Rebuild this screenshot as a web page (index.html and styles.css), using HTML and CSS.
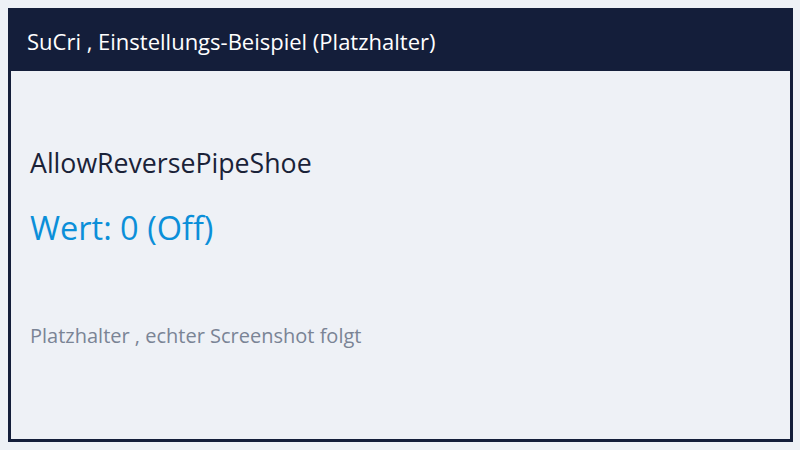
FILE: index.html
```html
<!DOCTYPE html>
<html>
<head>
  <meta charset="UTF-8">
  <link rel="stylesheet" href="styles.css">
  <title>SuCri Einstellung</title>
</head>
<body>
  <div class="frame">
    <div class="head">SuCri , Einstellungs-Beispiel (Platzhalter)</div>
    <div class="content">
      <div class="name">AllowReversePipeShoe</div>
      <div class="value">Wert: 0 (Off)</div>
      <div class="note">Platzhalter , echter Screenshot folgt</div>
    </div>
  </div>
</body>
</html>
```

FILE: styles.css
```css
html,
body {
  margin: 0;
  background: #eef1f6;
}

body {
  padding: 8px;
  font-family: "Open Sans", "Noto Sans", sans-serif;
}

.frame {
  width: 785px;
  height: 434px;
  box-sizing: border-box;
  border: 3px solid #141e3a;
  border-top: 0;
  display: flex;
  flex-direction: column;
}

.head {
  height: 63px;
  box-sizing: border-box;
  margin: 0 -3px;
  padding: 2px 19px 0;
  background: #141e3a;
  color: #ffffff;
  font-size: 22px;
  display: flex;
  align-items: center;
}

.content {
  flex: 1;
  padding: 74px 19px 0;
  display: flex;
  flex-direction: column;
}

.name {
  color: #1a2238;
  font-size: 26.7px;
  line-height: 36px;
}

.value {
  margin-top: 27px;
  color: #0b8fd9;
  font-size: 32.5px;
  line-height: 40px;
}

.note {
  margin-top: 74px;
  color: #7a8495;
  font-size: 20px;
  line-height: 28px;
}
```
